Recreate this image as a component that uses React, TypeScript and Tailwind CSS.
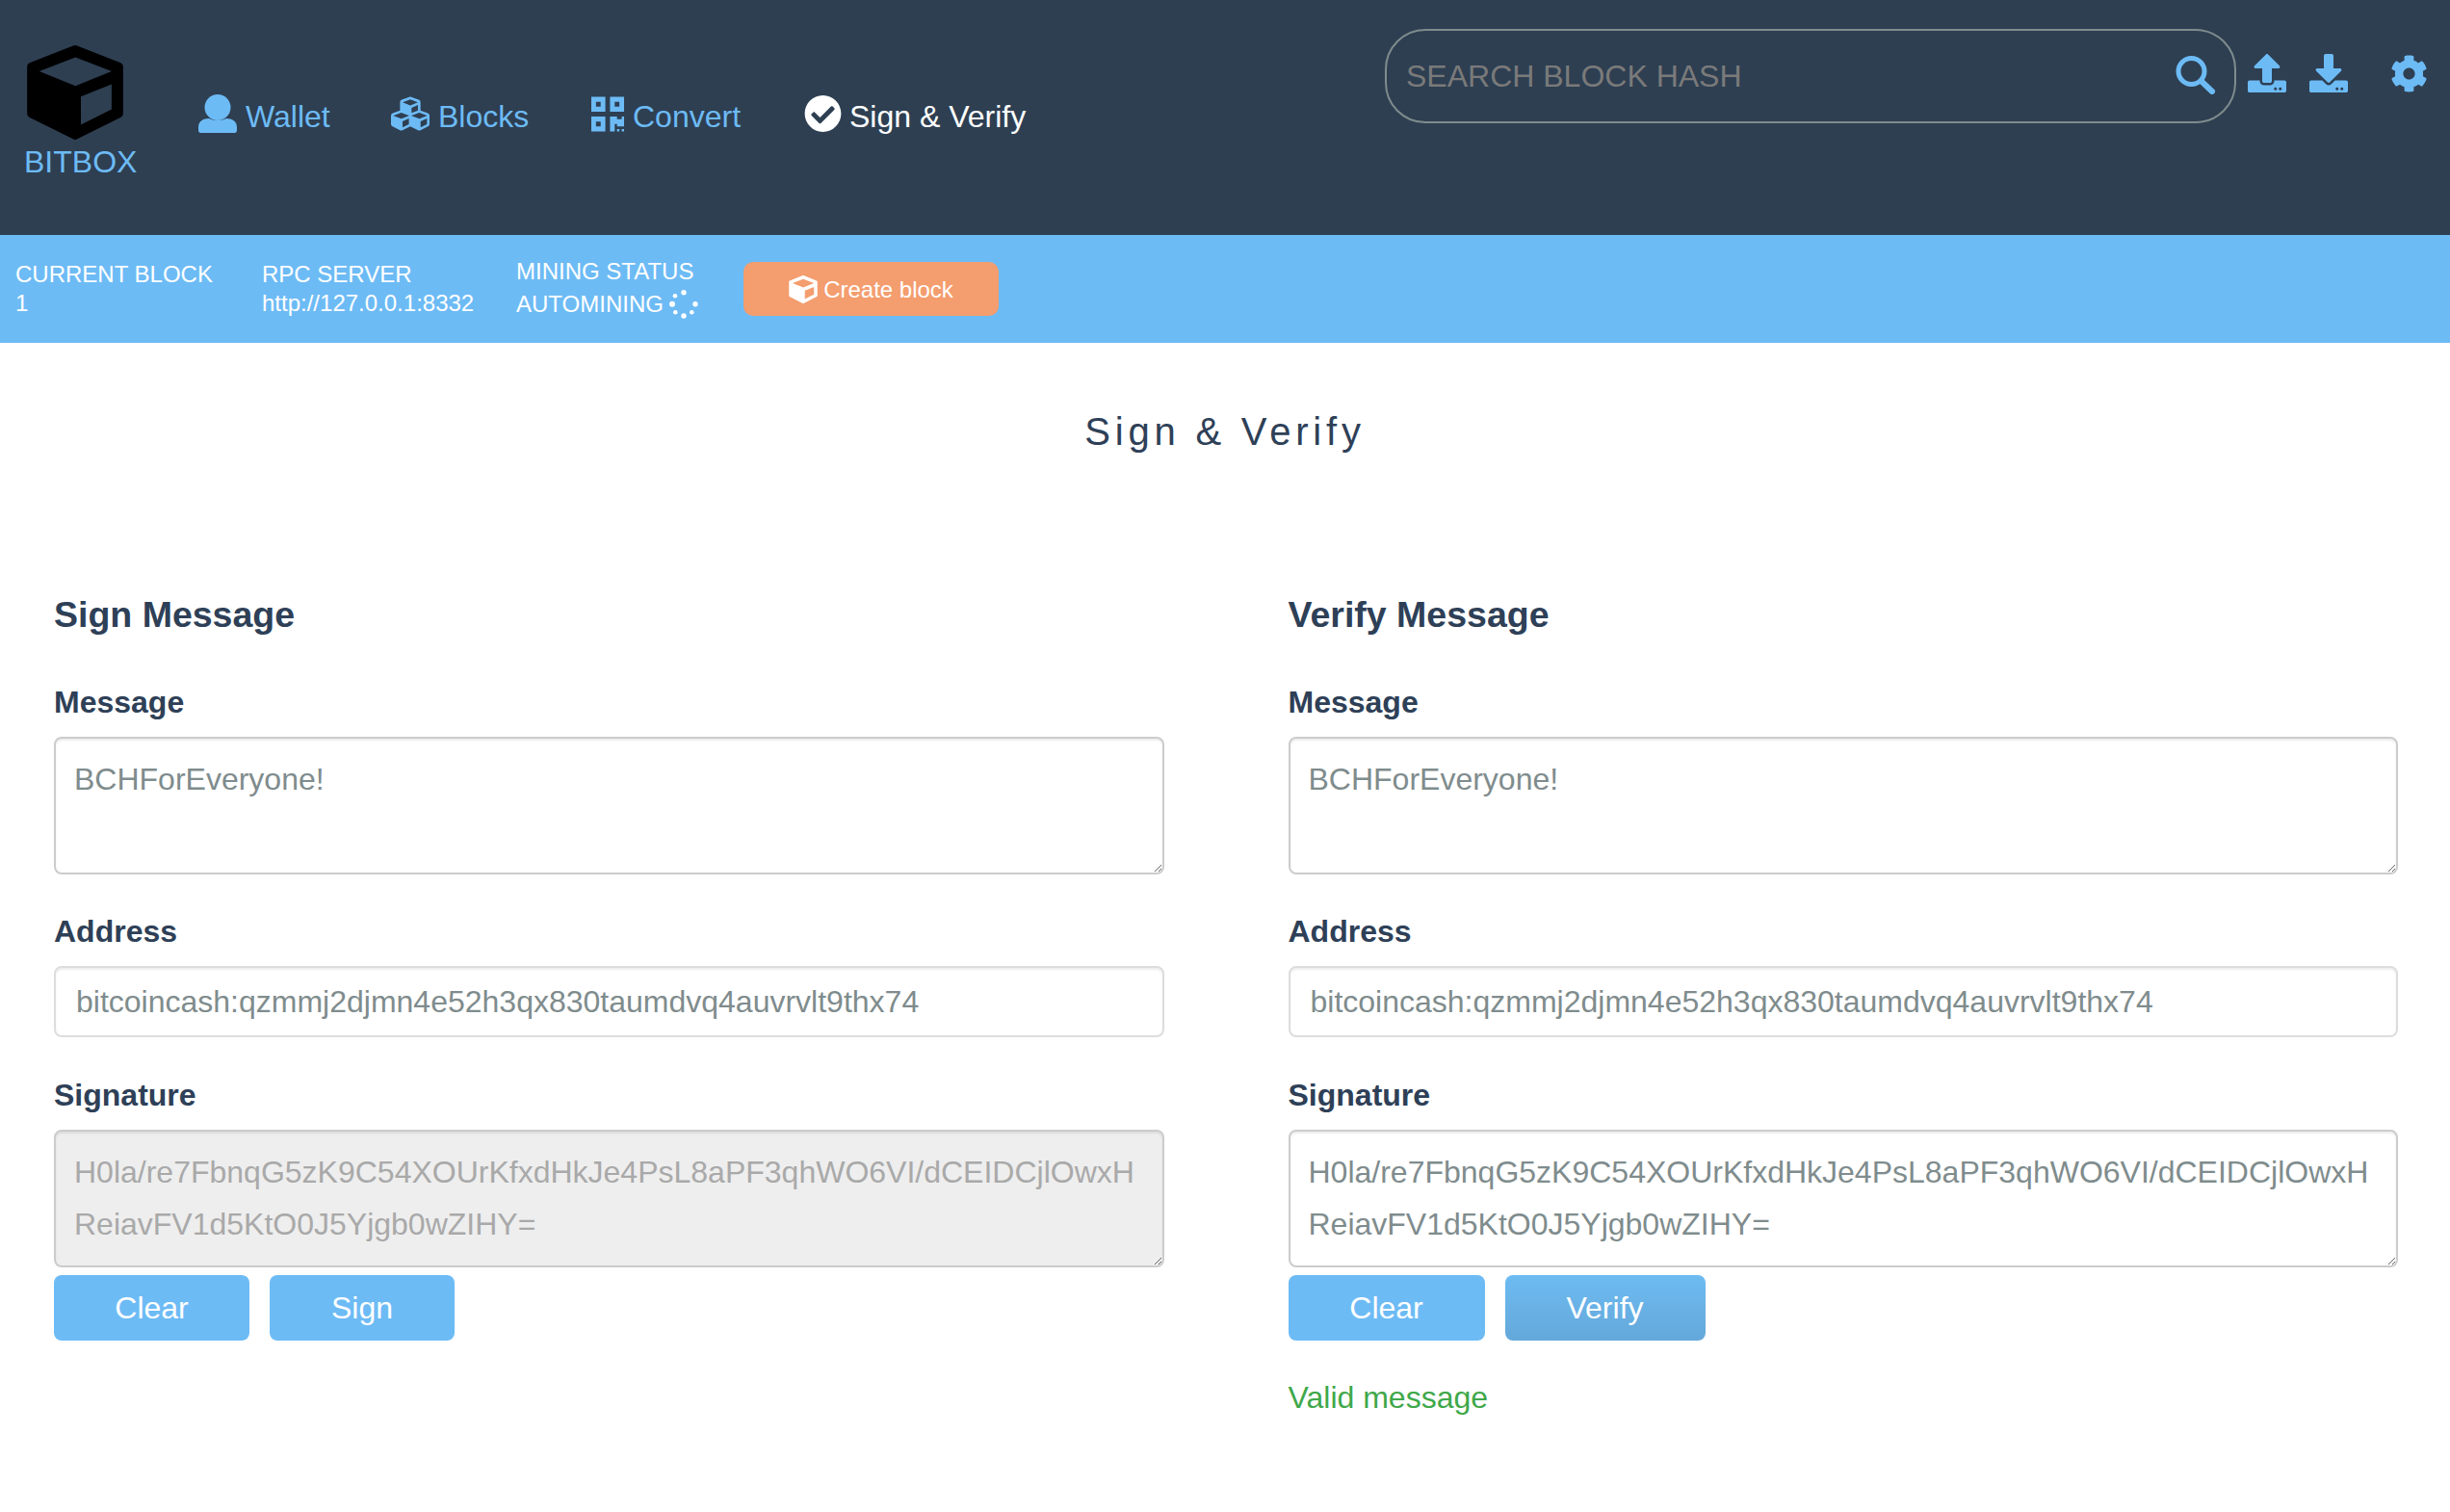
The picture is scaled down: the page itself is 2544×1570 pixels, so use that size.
import { FaCubes, FaQrcode, FaCheckCircle, FaUpload, FaDownload, FaCog } from "react-icons/fa";

const font = { fontFamily: '"Liberation Sans", Arial, sans-serif' };
const SIG = "H0la/re7FbnqG5zK9C54XOUrKfxdHkJe4PsL8aPF3qhWO6VI/dCEIDCjlOwxHReiavFV1d5KtO0J5Yjgb0wZIHY=";
const ADDR = "bitcoincash:qzmmj2djmn4e52h3qx830taumdvq4auvrvlt9thx74";

function Cube({ w, h, color, hole }: { w: number; h: number; color: string; hole: string }) {
  return (
    <svg width={w} height={h} viewBox="54 50 300 295" className="shrink-0">
      <path d="M204 62 L342 116 V264 L204 333 L66 264 V116 Z" fill={color} stroke={color} strokeWidth="24" strokeLinejoin="round" />
      <path d="M92 131 L205 88 L318 131 L205 177 Z" fill={hole} />
      <path d="M222 210 L318 172 V250 L222 298 Z" fill={hole} />
    </svg>
  );
}

function Spinner() {
  const dots = [
    [15, 2.7, 2.7], [6, 6.3, 2.3], [3, 14.7, 3], [6.3, 23.3, 2.3], [15, 27, 2.7], [23.3, 23.3, 2.3], [27, 14.7, 2.7],
  ];
  return (
    <svg width="30" height="30" viewBox="0 0 30 30" className="ml-[6px] shrink-0">
      {dots.map(([x, y, r], i) => <circle key={i} cx={x} cy={y} r={r} fill="#fff" />)}
    </svg>
  );
}

function SearchIcon() {
  return (
    <svg width="42" height="40" viewBox="0 0 42 40" className="shrink-0">
      <circle cx="16.5" cy="16" r="13.5" fill="none" stroke="#6dbbf5" strokeWidth="5" />
      <path d="M27 26.5 L38 37" stroke="#6dbbf5" strokeWidth="6" strokeLinecap="round" />
    </svg>
  );
}

function UserIcon() {
  return (
    <svg width="40" height="40" viewBox="0 0 40 40" className="shrink-0" fill="currentColor">
      <circle cx="20" cy="13.5" r="13.5" />
      <path d="M2.5 40 Q0 40 0 37 V34 C0 28 5 25 11 25 C15 27.5 25 27.5 29 25 C35 25 40 28 40 34 V37 Q40 40 37.5 40 Z" />
    </svg>
  );
}

function NavItem({ icon, label, active, gap, width }: { icon: React.ReactNode; label: string; active?: boolean; gap: string; width: string }) {
  return (
    <div className={`flex items-center ${gap} ${width} ${active ? "text-white" : "text-[#6dbbf5]"}`}>
      {icon}
      <span className="text-[32px] leading-[40px] pt-[5px]">{label}</span>
    </div>
  );
}

function Label({ children }: { children: React.ReactNode }) {
  return <div className="text-[32px] leading-[36px] font-bold text-[#2e4057] mb-[18px]">{children}</div>;
}

const boxBase =
  "block w-full border-2 rounded-[8px] text-[32px] shadow-[inset_0_2px_2px_rgba(0,0,0,0.075)] outline-none";

function Area({ value, disabled }: { value: string; disabled?: boolean }) {
  return (
    <textarea
      readOnly
      value={value}
      style={font}
      className={`${boxBase} border-[#cccccc] h-[143px] leading-[54px] py-[15px] px-[19px] ${disabled ? "bg-[#eeeeee] text-[#a9a9a9]" : "bg-white text-[#7f8c8d]"}`}
    />
  );
}

function Column({ title, action, actionClass, clearW, message }: { title: string; action: string; actionClass: string; clearW: string; message?: string }) {
  const isSign = action === "Sign";
  return (
    <div>
      <h2 className="text-[37.5px] leading-[44px] font-bold text-[#2e4057] mb-[51px]">{title}</h2>
      <Label>Message</Label>
      <Area value="BCHForEveryone!" />
      <div className="mt-[41px]"><Label>Address</Label></div>
      <input
        readOnly
        value={ADDR}
        style={font}
        className={`${boxBase} border-[#dddddd] h-[74px] px-[21px] bg-white text-[#7f8c8d]`}
      />
      <div className="mt-[42px]"><Label>Signature</Label></div>
      <Area value={SIG} disabled={isSign} />
      <div className="flex gap-[21px] mt-[8px]">
        <button className={`h-[68px] ${clearW} rounded-[8px] bg-[#6dbbf5] text-white text-[32px]`} style={font}>Clear</button>
        <button className={`h-[68px] rounded-[8px] text-white text-[32px] ${actionClass}`} style={font}>{action}</button>
      </div>
      {message && <div className="mt-[39px] text-[32px] leading-[40px] text-[#3fa84a]">{message}</div>}
    </div>
  );
}

export default function App() {
  return (
    <div style={font} className="w-full min-h-[1570px] bg-white">
      <header className="h-[244px] bg-[#2e3f52] flex items-start">
        <div className="w-[206px] shrink-0 pl-[25px] pt-[47px] flex flex-col items-start">
          <div className="ml-[3px]"><Cube w={100} h={98} color="#000000" hole="#2e3f52" /></div>
          <div className="text-[32px] leading-[40px] text-[#6dbbf5] mt-[3px]">BITBOX</div>
        </div>
        <nav className="flex items-center h-[40px] mt-[98px]">
          <NavItem width="w-[200px]" gap="gap-[9px]" label="Wallet" icon={<UserIcon />} />
          <NavItem width="w-[208px]" gap="gap-[9px]" label="Blocks" icon={<FaCubes className="w-[40px] h-[40px]" />} />
          <NavItem width="w-[221px]" gap="gap-[9px]" label="Convert" icon={<FaQrcode className="w-[34px] h-[41px]" preserveAspectRatio="none" />} />
          <NavItem active gap="gap-[8px]" width="w-[240px]" label="Sign & Verify" icon={<FaCheckCircle className="w-[39px] h-[40px]" />} />
        </nav>
        <div className="ml-auto flex items-start pr-[23px] pt-[30px]">
          <div className="w-[884px] h-[98px] rounded-[42px] border-2 border-[#7f8c8d] flex items-center pl-[20px] pr-[19px]">
            <input
              readOnly
              placeholder="SEARCH BLOCK HASH"
              style={font}
              className="flex-1 bg-transparent text-[32px] outline-none placeholder:text-[#7a7a7a] text-[#7a7a7a]"
            />
            <div className="mb-[2px]"><SearchIcon /></div>
          </div>
          <div className="flex items-center h-[40px] mt-[26px] ml-[12px] text-[#6dbbf5]">
            <FaUpload className="w-[40px] h-[40px]" />
            <FaDownload className="w-[40px] h-[40px] ml-[24px]" />
            <FaCog className="w-[39px] h-[39px] ml-[44px]" />
          </div>
        </div>
      </header>

      <div className="h-[112px] bg-[#6dbbf5] flex items-center text-white text-[24px] pl-[16px]">
        <div className="w-[256px] leading-[30px]">
          <div className="mt-[-1px]">CURRENT BLOCK</div>
          <div>1</div>
        </div>
        <div className="w-[264px] leading-[30px]">
          <div className="mt-[-1px]">RPC SERVER</div>
          <div>http://127.0.0.1:8332</div>
        </div>
        <div className="w-[236px]">
          <div className="leading-[30px]">MINING STATUS</div>
          <div className="flex items-center leading-[34px] mt-[2px]">AUTOMINING<Spinner /></div>
        </div>
        <button style={font} className="w-[265px] h-[56px] rounded-[10px] bg-[#f49d6e] text-white text-[24px] flex items-center justify-center gap-[6px]">
          <Cube w={30} h={29} color="#ffffff" hole="#f49d6e" />
          <span className="pt-[2px]">Create block</span>
        </button>
      </div>

      <h1 className="mt-[68px] text-center text-[40px] leading-[48px] tracking-[4.8px] text-[#2e4057]">Sign &amp; Verify</h1>

      <main className="mt-[144px] grid grid-cols-2 gap-x-[129px] pl-[56px] pr-[54px]">
        <Column title="Sign Message" action="Sign" clearW="w-[203px]" actionClass="w-[192px] bg-[#6dbbf5]" />
        <Column title="Verify Message" action="Verify" clearW="w-[204px]" actionClass="w-[208px] bg-gradient-to-b from-[#6dbbf2] to-[#64a8da]" message="Valid message" />
      </main>
    </div>
  );
}
